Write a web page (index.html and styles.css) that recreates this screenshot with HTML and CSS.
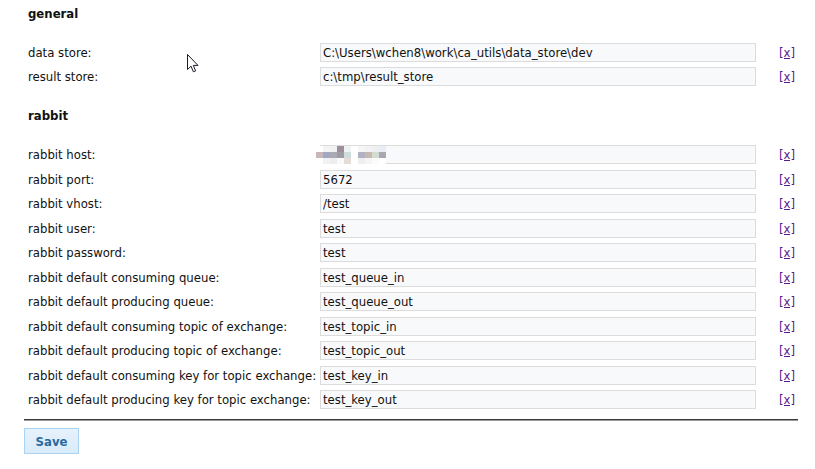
FILE: index.html
```html
<!DOCTYPE html>
<html>
<head>
<meta charset="utf-8">
<link rel="stylesheet" href="styles.css">
</head>
<body>
<div class="page">
  <h3 class="section">general</h3>
  <div class="form general">
    <label class="lbl">data store:</label>
    <input class="fld" type="text" value="C:\Users\wchen8\work\ca_utils\data_store\dev">
    <a class="rm" href="#">[x]</a>
    <label class="lbl">result store:</label>
    <input class="fld" type="text" value="c:\tmp\result_store">
    <a class="rm" href="#">[x]</a>
  </div>
  <h3 class="section rabbit">rabbit</h3>
  <div class="form">
    <label class="lbl">rabbit host:</label>
    <div class="fldwrap">
      <input class="fld" type="text" value="">
      <div class="mosaic">
        <span style="background:#fff"></span><span style="background:#f4f4f6"></span><span style="background:#f0f2f2"></span><span style="background:#9c8e9a"></span><span style="background:#eef2f2"></span><span style="background:#fff"></span><span style="background:#f6f6f6"></span><span style="background:#f2f2f4"></span><span style="background:#eef0f0"></span><span style="background:#e8eef8"></span>
        <span style="background:#c8b6b8"></span><span style="background:#a2a8c2"></span><span style="background:#aaaab4"></span><span style="background:#a09aa2"></span><span style="background:#cfdcdc"></span><span style="background:#fff"></span><span style="background:#b2b2c2"></span><span style="background:#c9b8b2"></span><span style="background:#d2dcd2"></span><span style="background:#a9a8b2"></span>
        <span style="background:#fff"></span><span style="background:#f2f2f2"></span><span style="background:#eceeee"></span><span style="background:#fafafa"></span><span style="background:#e4dcd8"></span><span style="background:#fff"></span><span style="background:#eef0ee"></span><span style="background:#f6f4f4"></span><span style="background:#fbfbfb"></span><span style="background:#fff"></span>
      </div>
    </div>
    <a class="rm" href="#">[x]</a>
    <label class="lbl">rabbit port:</label>
    <input class="fld" type="text" value="5672">
    <a class="rm" href="#">[x]</a>
    <label class="lbl">rabbit vhost:</label>
    <input class="fld" type="text" value="/test">
    <a class="rm" href="#">[x]</a>
    <label class="lbl">rabbit user:</label>
    <input class="fld" type="text" value="test">
    <a class="rm" href="#">[x]</a>
    <label class="lbl">rabbit password:</label>
    <input class="fld" type="text" value="test">
    <a class="rm" href="#">[x]</a>
    <label class="lbl">rabbit default consuming queue:</label>
    <input class="fld" type="text" value="test_queue_in">
    <a class="rm" href="#">[x]</a>
    <label class="lbl">rabbit default producing queue:</label>
    <input class="fld" type="text" value="test_queue_out">
    <a class="rm" href="#">[x]</a>
    <label class="lbl">rabbit default consuming topic of exchange:</label>
    <input class="fld" type="text" value="test_topic_in">
    <a class="rm" href="#">[x]</a>
    <label class="lbl">rabbit default producing topic of exchange:</label>
    <input class="fld" type="text" value="test_topic_out">
    <a class="rm" href="#">[x]</a>
    <label class="lbl">rabbit default consuming key for topic exchange:</label>
    <input class="fld" type="text" value="test_key_in">
    <a class="rm" href="#">[x]</a>
    <label class="lbl">rabbit default producing key for topic exchange:</label>
    <input class="fld" type="text" value="test_key_out">
    <a class="rm" href="#">[x]</a>
  </div>
  <div class="rule"></div>
  <button class="save" type="button">Save</button>
</div>
<svg class="cursor" width="12" height="19" viewBox="0 0 12 19">
  <path d="M0.5 0.5 L0.5 15.5 L4 12.2 L6.4 17.8 L8.6 16.9 L6.3 11.4 L11 11.4 Z" fill="#fff" stroke="#1a1a2a" stroke-width="1" stroke-linejoin="miter"/>
</svg>
</body>
</html>
```
FILE: styles.css
```css
html, body {
  margin: 0;
  padding: 0;
  background: #fff;
}
body {
  font-family: "DejaVu Sans Condensed", "Liberation Sans", sans-serif;
  font-size: 13px;
  color: #111;
  position: relative;
  width: 815px;
  height: 469px;
  overflow: hidden;
}
.page {
  width: 774px;
  margin-left: 24px;
  padding-top: 6px;
}
.section {
  margin: 0;
  padding-left: 4px;
  font-size: 13px;
  font-weight: bold;
  line-height: 16px;
  height: 16px;
}
.section.rabbit {
  margin-top: 22px;
}
.form {
  display: grid;
  grid-template-columns: 292px 436px 1fr;
  grid-auto-rows: 19px;
  row-gap: 5.5px;
  align-items: center;
  padding-left: 4px;
  margin-top: 21px;
}
.form.general {
  row-gap: 5px;
}
.lbl {
  line-height: 19px;
  white-space: nowrap;
}
.fld {
  box-sizing: border-box;
  width: 436px;
  height: 19px;
  margin: 0;
  padding: 0 2px;
  border: 1px solid #dcdcdc;
  background: #f8f9fb;
  font-family: "DejaVu Sans Condensed", "Liberation Sans", sans-serif;
  font-size: 13px;
  color: #111;
  outline: none;
}
.fldwrap {
  position: relative;
  width: 436px;
  height: 19px;
}
.mosaic {
  position: absolute;
  left: -4px;
  top: 1px;
  display: grid;
  grid-template-columns: repeat(10, 7px);
  grid-auto-rows: 6px;
}
.rm {
  justify-self: start;
  margin-left: 23px;
  color: #5a1a8c;
  text-decoration: underline;
  line-height: 19px;
}
.rule {
  margin-top: 10px;
  height: 1px;
  border-top: 1px solid #3a3a3a;
  background: #9a9a9a;
}
.save {
  display: block;
  margin-top: 7px;
  width: 55px;
  height: 26px;
  padding: 0;
  border: 1px solid #a9d3f1;
  background: linear-gradient(#e6f2fc, #d9ebf9);
  color: #2d6a9e;
  font-family: "DejaVu Sans Condensed", "Liberation Sans", sans-serif;
  font-size: 13px;
  font-weight: bold;
}
.cursor {
  position: absolute;
  left: 187px;
  top: 54px;
}
```
